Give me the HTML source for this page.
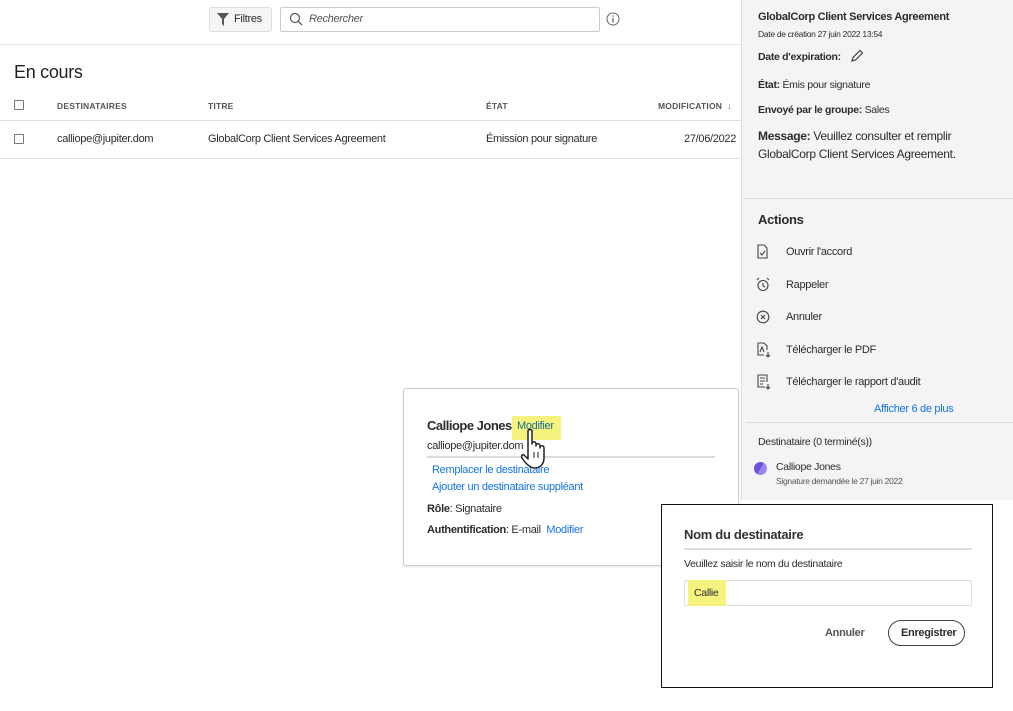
<!DOCTYPE html>
<html><head><meta charset="utf-8"><style>
*{box-sizing:border-box;margin:0;padding:0}
body{width:1013px;height:711px;background:#fff;font-family:"Liberation Sans",sans-serif;color:#2c2c2c;position:relative;overflow:hidden;font-size:11px;letter-spacing:-0.3px}
.a{position:absolute;white-space:nowrap}
.blue{color:#1473e6}
.hl{background:#f5f27e}
.cb{position:absolute;width:10px;height:10px;border:1px solid #777;border-radius:1px;background:#fff}
.hd{font-size:8.5px;font-weight:bold;color:#555;letter-spacing:0.2px}
</style></head><body>
<div class="a" style="left:209px;top:7px;width:63px;height:25px;border:1px solid #ddd;border-radius:3px;background:#f5f5f5"></div>
<svg class="a" style="left:217px;top:13px" width="12" height="13"><path d="M0 0H12L7 6V13L5 11V6Z" fill="#555"/></svg>
<div class="a" style="left:234px;top:13px;font-size:11px">Filtres</div>
<div class="a" style="left:280px;top:7px;width:320px;height:25px;border:1px solid #ccc;border-radius:2px"></div>
<svg class="a" style="left:289px;top:12px" width="14" height="14"><circle cx="6" cy="6" r="4.5" fill="none" stroke="#555" stroke-width="1.2"/><path d="M9.3 9.3L13 13" stroke="#555" stroke-width="1.3"/></svg>
<div class="a" style="left:309px;top:13px;font-style:italic;color:#555">Rechercher</div>
<svg class="a" style="left:606px;top:12px" width="14" height="14"><circle cx="7" cy="7" r="6" fill="none" stroke="#666"/><path d="M7 6V10.5M7 3.5V4.8" stroke="#666" stroke-width="1.3"/></svg>
<div class="a" style="left:0;top:44px;width:741px;height:1px;background:#e5e5e5"></div>
<div class="a" style="left:14px;top:62px;font-size:18px;color:#222">En cours</div>
<div class="cb" style="left:14px;top:100px"></div>
<div class="a hd" style="left:57px;top:101px">DESTINATAIRES</div>
<div class="a hd" style="left:208px;top:101px">TITRE</div>
<div class="a hd" style="left:486px;top:101px">ÉTAT</div>
<div class="a hd" style="left:658px;top:101px">MODIFICATION &nbsp;↓</div>
<div class="a" style="left:0;top:120px;width:741px;height:1px;background:#e0e0e0"></div>
<div class="cb" style="left:14px;top:134px"></div>
<div class="a" style="left:57px;top:133px">calliope@jupiter.dom</div>
<div class="a" style="left:208px;top:133px">GlobalCorp Client Services Agreement</div>
<div class="a" style="left:486px;top:133px">Émission pour signature</div>
<div class="a" style="left:684px;top:133px">27/06/2022</div>
<div class="a" style="left:0;top:158px;width:741px;height:1px;background:#e0e0e0"></div>
<div class="a" style="left:741px;top:0;width:272px;height:500px;background:#f4f4f4;border-left:1px solid #ddd"></div>
<div class="a" style="left:758px;top:11px;font-weight:bold;font-size:11px">GlobalCorp Client Services Agreement</div>
<div class="a" style="left:758px;top:29px;font-size:8.5px">Date de création 27 juin 2022 13:54</div>
<div class="a" style="left:758px;top:51px;font-weight:bold;font-size:10.5px">Date d'expiration:</div>
<svg class="a" style="left:850px;top:49px" width="14" height="14"><path d="M2 12L3 8.5L10 1.5L12.5 4L5.5 11Z" fill="none" stroke="#444" stroke-width="1.2"/></svg>
<div class="a" style="left:758px;top:79px;font-size:10.5px"><b>État:</b> Émis pour signature</div>
<div class="a" style="left:758px;top:104px;font-size:10.5px"><b>Envoyé par le groupe:</b> Sales</div>
<div class="a" style="left:758px;top:127px;font-size:12px;line-height:18px;white-space:normal;width:240px"><b>Message:</b> Veuillez consulter et remplir GlobalCorp Client Services Agreement.</div>
<div class="a" style="left:745px;top:198px;width:268px;height:1px;background:#ddd"></div>
<div class="a" style="left:758px;top:212px;font-size:13px;font-weight:bold">Actions</div>
<svg class="a" style="left:756px;top:244px" width="14" height="16"><path d="M2 1H8L11 4V14H2Z M4 9L6 11L9 7" fill="none" stroke="#444" stroke-width="1.1"/></svg>
<div class="a" style="left:786px;top:246px">Ouvrir l'accord</div>
<svg class="a" style="left:756px;top:277px" width="14" height="15"><circle cx="7" cy="8.5" r="5" fill="none" stroke="#444" stroke-width="1.1"/><path d="M7 6V9L9 10M1 3L3 1M13 3L11 1" fill="none" stroke="#444" stroke-width="1.1"/></svg>
<div class="a" style="left:786px;top:279px">Rappeler</div>
<svg class="a" style="left:756px;top:310px" width="14" height="14"><circle cx="7" cy="7" r="5.8" fill="none" stroke="#444" stroke-width="1.1"/><path d="M5 5L9 9M9 5L5 9" stroke="#444" stroke-width="1.1"/></svg>
<div class="a" style="left:786px;top:311px">Annuler</div>
<svg class="a" style="left:756px;top:342px" width="15" height="16"><path d="M8 13H2V1H8L11 4V8M4 10L6 5L8 10M12 10V15M10 13L12 15L14 13" fill="none" stroke="#444" stroke-width="1.1"/></svg>
<div class="a" style="left:786px;top:344px">Télécharger le PDF</div>
<svg class="a" style="left:756px;top:374px" width="15" height="16"><path d="M9 13H2V1H11V8M4 4H9M4 7H9M4 10H7M12 10V15M10 13L12 15L14 13" fill="none" stroke="#444" stroke-width="1.1"/></svg>
<div class="a" style="left:786px;top:376px">Télécharger le rapport d'audit</div>
<div class="a blue" style="left:874px;top:403px">Afficher 6 de plus</div>
<div class="a" style="left:746px;top:422px;width:267px;height:1px;background:#ddd"></div>
<div class="a" style="left:758px;top:436px;font-size:10.5px">Destinataire (0 terminé(s))</div>
<div class="a" style="left:754px;top:462px;width:13px;height:13px;border-radius:50%;background:linear-gradient(120deg,#6a52d8 50%,#9b86f0 50%)"></div>
<div class="a" style="left:776px;top:461px;font-size:10.5px">Calliope Jones</div>
<div class="a" style="left:776px;top:476px;font-size:8.5px;color:#555">Signature demandée le 27 juin 2022</div>
<div class="a" style="left:403px;top:388px;width:336px;height:178px;background:#fff;border:1px solid #ccc;border-radius:3px;box-shadow:0 1px 2px rgba(0,0,0,.1)"></div>
<div class="a" style="left:427px;top:418px;font-size:13px;font-weight:bold;letter-spacing:-0.5px">Calliope Jones</div>
<div class="a hl" style="left:512px;top:416px;width:49px;height:24px"></div>
<div class="a" style="left:517px;top:420px;color:#1a6e8e">Modifier</div>
<div class="a" style="left:427px;top:440px">calliope@jupiter.dom</div>
<div class="a" style="left:427px;top:456px;width:288px;height:2px;background:#ddd"></div>
<div class="a blue" style="left:432px;top:464px">Remplacer le destinataire</div>
<div class="a blue" style="left:432px;top:481px">Ajouter un destinataire suppléant</div>
<div class="a" style="left:427px;top:503px"><b>Rôle</b>: Signataire</div>
<div class="a" style="left:427px;top:524px"><b>Authentification</b>: E-mail &nbsp;<span class="blue">Modifier</span></div>
<svg class="a" style="left:518px;top:428px" width="36" height="44"><path d="M10 3C10 1 14 1 14 3V16C14 13 18 13 18 16V18C18 15 22 15 22 18V20C22 17 26 17 26 20V30C26 36 22 40 17 40C12 40 8 36 4 30C3 28 4 26 6 27L10 31Z" fill="#fff" stroke="#222" stroke-width="1.5" stroke-linejoin="round"/><path d="M16 24V30M20 24V30" stroke="#222"/></svg>
<div class="a" style="left:661px;top:504px;width:332px;height:184px;background:#fff;border:1px solid #111"></div>
<div class="a" style="left:684px;top:527px;font-size:13px;font-weight:bold;color:#333">Nom du destinataire</div>
<div class="a" style="left:684px;top:548px;width:288px;height:2px;background:#ddd"></div>
<div class="a" style="left:684px;top:558px;font-size:10.5px">Veuillez saisir le nom du destinataire</div>
<div class="a" style="left:684px;top:580px;width:288px;height:26px;border:1px solid #ddd;border-radius:2px"></div>
<div class="a hl" style="left:688px;top:580px;width:38px;height:26px"></div>
<div class="a" style="left:694px;top:587px;font-size:10.5px">Callie</div>
<div class="a" style="left:825px;top:627px;font-weight:bold;color:#555">Annuler</div>
<div class="a" style="left:888px;top:620px;width:77px;height:26px;border:1.5px solid #444;border-radius:13px"></div>
<div class="a" style="left:901px;top:627px;font-weight:bold">Enregistrer</div>
</body></html>
